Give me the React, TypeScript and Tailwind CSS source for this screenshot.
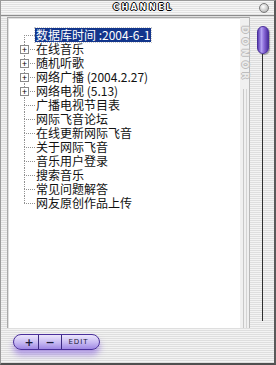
const items = [
  { label: '在线音乐', plus: true },
  { label: '随机听歌', plus: true },
  { label: '网络广播 (2004.2.27)', plus: true },
  { label: '网络电视 (5.13)', plus: true },
  { label: '广播电视节目表', plus: false },
  { label: '网际飞音论坛', plus: false },
  { label: '在线更新网际飞音', plus: false },
  { label: '关于网际飞音', plus: false },
  { label: '音乐用户登录', plus: false },
  { label: '搜索音乐', plus: false },
  { label: '常见问题解答', plus: false },
  { label: '网友原创作品上传', plus: false },
];

const stripes =
  'bg-[repeating-linear-gradient(to_bottom,#f3f3f3_0px,#f3f3f3_1px,#dedede_1px,#dedede_2px)]';

const TreeRow = ({ label, plus, first, last, selected }: { label: string; plus?: boolean; first?: boolean; last?: boolean; selected?: boolean }) => {
  return (
    <div className="flex h-[14px] items-center">
      <div className="relative ml-[15px] flex h-full w-[11px] flex-col">
        <div className={`h-[7px] ${first ? '' : 'border-l border-dotted border-[#909090]'}`} />
        <div className={`h-[7px] border-t border-dotted border-[#909090] ${last ? '' : 'border-l'}`} />
        {plus && (
          <div className="absolute left-[-4px] top-[3px] flex h-[9px] w-[9px] items-center justify-center border border-[#8a8a8a] bg-white text-[9px] leading-none text-black">
            <span className="-mt-[1px]">+</span>
          </div>
        )}
      </div>
      <span
        className={`whitespace-nowrap px-[1px] text-[12px] leading-[14px] ${
          selected ? 'bg-[#12358c] text-white outline-1 outline-dotted outline-[#c8c8c8]' : 'text-[#111]'
        }`}
      >
        {label}
      </span>
    </div>
  );
};

export default function App() {
  return (
    <div
      className={`flex h-[365px] w-[276px] flex-col border-t border-l border-[#9a9a9a] border-r-2 border-r-[#5a5a5a] border-b-2 border-b-[#505050] ${stripes}`}
      style={{ fontFamily: '"Noto Sans CJK SC", "Noto Sans", sans-serif' }}
    >
      {/* title bar */}
      <div className="grid h-[15px] grid-cols-[1fr_auto_1fr] items-center border-b border-[#8c8c8c] bg-[repeating-linear-gradient(to_bottom,#f6f6f6_0px,#f6f6f6_1px,#e2e2e2_1px,#e2e2e2_2px)]">
        <div />
        <span
          className="pl-[12px] text-[8px] font-bold leading-none tracking-[2.6px] text-white"
          style={{ fontFamily: '"DejaVu Sans", sans-serif', textShadow: '1px 0 #000, -1px 0 #000, 0 1px #000, 0 -1px #000' }}
        >
          CHANNEL
        </span>
        <div className="flex justify-end pr-[5px]">
          <div className="h-[10px] w-[10px] rounded-full border border-[#7a7a7a] bg-[radial-gradient(circle_at_40%_35%,#ffffff,#c8c8c8_60%,#9a9a9a)]" />
        </div>
      </div>

      <div className="flex h-[313px] pt-[1px]">
        {/* content panel */}
        <div className="ml-[6px] flex h-[311px] w-[243px] border-t border-l border-[#a8a8a8] border-r border-r-[#b8b8b8]">
          <div className="flex-1 border-t border-l border-[#e0e0e0] bg-white pt-[9px]">
            <TreeRow label="数据库时间 :2004-6-1" first selected />
            {items.map((it, i) => (
              <TreeRow key={it.label} label={it.label} plus={it.plus} last={i === items.length - 1} />
            ))}
          </div>
          <div className="flex w-[9px] flex-col items-center bg-[#f0f0f0] pt-[8px]">
            <span
              className="text-[9px] font-bold leading-none tracking-[4px] text-[#ececec] [writing-mode:vertical-rl]"
              style={{ fontFamily: '"DejaVu Sans", sans-serif', textShadow: '1px 0 #bdbdbd, -1px 0 #bdbdbd, 0 1px #bdbdbd, 0 -1px #bdbdbd' }}
            >
              DONOR
            </span>
            <div className="mt-[6px] flex flex-1 gap-[2px]">
              <div className="w-[1px] bg-[#c8c8c8]" />
              <div className="w-[1px] bg-[#d4d4d4]" />
            </div>
          </div>
        </div>

        {/* scroll track */}
        <div className="flex flex-1 flex-col items-center pt-[9px] pl-[1px]">
          <div className="h-[28px] w-[12px] rounded-full border border-[#4a2f9a] bg-[linear-gradient(to_right,#5b3fb5,#b4a2f2_35%,#8a6ad8_60%,#4d2f9e)] shadow-[1px_1px_1px_rgba(0,0,0,0.35)]" />
          <div className="h-[267px] w-[1px] bg-[#2e2e2e]" />
        </div>
      </div>

      {/* bottom bar */}
      <div className="flex flex-1 items-start pl-[12px] pt-[5px]">
        <div
          className="flex h-[16px] items-center rounded-full border border-[#4a2f9a] bg-[linear-gradient(to_bottom,#ece6fc,#c6b8f2_55%,#9f88e4)] text-[#1c1c3a] shadow-[0_5px_6px_rgba(130,90,220,0.55)]"
          style={{ fontFamily: '"DejaVu Sans", sans-serif' }}
        >
          <span className="w-[24px] pl-[6px] text-center text-[11px] font-bold leading-none">+</span>
          <div className="h-full w-[1px] bg-[#3c2a80]" />
          <span className="w-[22px] text-center text-[11px] font-bold leading-none">−</span>
          <div className="h-full w-[1px] bg-[#3c2a80]" />
          <span className="w-[37px] pr-[4px] text-center text-[7px] leading-none tracking-[1px]">EDIT</span>
        </div>
      </div>
    </div>
  );
}
